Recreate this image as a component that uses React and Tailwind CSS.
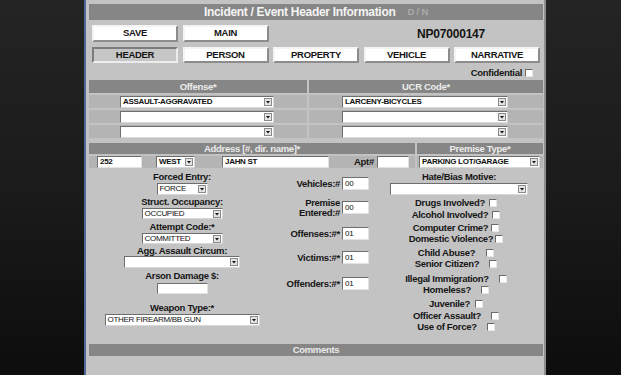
import React from "react";

const FONT = "font-['Liberation_Sans',Arial,Helvetica,sans-serif]";
const LBL = "text-[9.5px] tracking-[-0.3px] font-bold text-[#161616]";
const HDR = "text-[9.5px] tracking-[-0.3px] font-bold text-[#ececec] leading-none";

function Arrow() {
  return (
    <svg width="8" height="8" viewBox="0 0 8 8" className="shrink-0 mr-[1px]">
      <rect x="0.5" y="0.5" width="7" height="7" fill="#e4e4e4" stroke="#8a8a8a" />
      <path d="M2 3h4L4 5.5z" fill="#111" />
    </svg>
  );
}

function Select({ w, h = "h-[12px]", value = "", bold = false }) {
  return (
    <div
      className={`${w} ${h} shrink-0 flex items-center bg-white border border-t-[#6e6e6e] border-l-[#6e6e6e] border-b-[#d8d8d8] border-r-[#d8d8d8]`}
    >
      <span
        className={`flex-1 pl-[2px] text-[8px] tracking-[-0.3px] leading-none text-[#111] whitespace-nowrap overflow-hidden ${
          bold ? "font-bold" : ""
        }`}
      >
        {value}
      </span>
      <Arrow />
    </div>
  );
}

function Input({ w, h = "h-[12px]", value = "", bold = false }) {
  return (
    <div
      className={`${w} ${h} shrink-0 flex items-center bg-white border border-t-[#6e6e6e] border-l-[#6e6e6e] border-b-[#e2e2e2] border-r-[#e2e2e2]`}
    >
      <span className={`pl-[2px] text-[8px] tracking-[-0.3px] leading-none text-[#111] ${bold ? "font-bold" : ""}`}>
        {value}
      </span>
    </div>
  );
}

function Check() {
  return (
    <span className="inline-block w-[8px] h-[8px] shrink-0 bg-white border border-t-[#6a6a6a] border-l-[#6a6a6a] border-b-[#e6e6e6] border-r-[#e6e6e6]" />
  );
}

function Btn({ children, active = false }) {
  return (
    <div
      className={`w-[86px] h-full flex items-center justify-center text-[9.5px] tracking-[-0.3px] font-bold text-[#151515] border-2 ${
        active
          ? "bg-[#c6c6c6] border-t-[#7c7c7c] border-l-[#7c7c7c] border-b-[#ececec] border-r-[#ececec]"
          : "bg-white border-t-[#f4f4f4] border-l-[#f4f4f4] border-b-[#8c8c8c] border-r-[#8c8c8c]"
      }`}
    >
      {children}
    </div>
  );
}

const Label = ({ children, cls = "" }) => (
  <div className={`${LBL} leading-[12px] h-[12px] whitespace-nowrap ${cls}`}>{children}</div>
);

function CheckRow({ label, gap, mt }) {
  return (
    <div className={`h-[11px] flex items-center justify-center ${mt} ${gap}`}>
      <span className={`${LBL} leading-none whitespace-nowrap`}>{label}</span>
      <Check />
    </div>
  );
}

function MidRow({ label, mt, value }) {
  return (
    <div className={`flex items-center justify-end gap-[2px] ${mt}`}>
      <div className={`${LBL} leading-[9.5px] text-right whitespace-nowrap`}>{label}</div>
      <Input w="w-[27px]" h="h-[13px]" value={value} />
    </div>
  );
}

export default function App() {
  return (
    <div
      className={`w-[621px] h-[375px] overflow-hidden bg-linear-to-b from-[#242424] via-[#1b1b1b] to-[#0d0d0d] ${FONT}`}
    >
      <div className="ml-[84px] w-[462px] h-[375px] border-l-2 border-l-[#50679a] border-r-2 border-r-[#8e8e8e] bg-[#c3c3c3] pl-[3px] pr-[1px] pt-[4px]">
        {/* title bar */}
        <div className="h-[16px] bg-[#868686] flex items-center justify-center gap-[12px]">
          <span className="text-[12px] tracking-[-0.3px] font-bold text-[#f4f4f4] leading-none">
            Incident / Event Header Information
          </span>
          <span className="text-[9.5px] tracking-[-0.2px] font-bold text-[#ababab] leading-none">D / N</span>
        </div>

        {/* buttons row 1 */}
        <div className="mt-[5px] h-[17px] flex items-center pl-[3px] gap-[4.5px]">
          <Btn>SAVE</Btn>
          <Btn>MAIN</Btn>
          <span className="ml-[144px] text-[12px] tracking-[-0.2px] font-bold text-[#141414] leading-none">
            NP07000147
          </span>
        </div>

        {/* buttons row 2 */}
        <div className="mt-[5px] h-[16px] flex items-center pl-[3px] gap-[4.5px]">
          <Btn active>HEADER</Btn>
          <Btn>PERSON</Btn>
          <Btn>PROPERTY</Btn>
          <Btn>VEHICLE</Btn>
          <Btn>NARRATIVE</Btn>
        </div>

        {/* confidential */}
        <div className="mt-[5px] h-[10px] flex items-center justify-end gap-[3px] pr-[10px]">
          <span className={`${LBL} leading-none`}>Confidential</span>
          <Check />
        </div>

        {/* offense table */}
        <div className="mt-[2px] grid grid-cols-[218px_234px] gap-x-[2px] gap-y-[2px]">
          <div className={`h-[13px] bg-[#868686] flex items-center justify-center ${HDR}`}>Offense*</div>
          <div className={`h-[13px] bg-[#868686] flex items-center justify-center ${HDR}`}>UCR Code*</div>
          {[
            ["ASSAULT-AGGRAVATED", "LARCENY-BICYCLES"],
            ["", ""],
            ["", ""],
          ].map((r, i) => (
            <React.Fragment key={i}>
              <div className="h-[13px] bg-[#b4b4b4] flex items-center pl-[31px]">
                <Select w="w-[154px]" value={r[0]} bold />
              </div>
              <div className="h-[13px] bg-[#b4b4b4] flex items-center pl-[33px]">
                <Select w="w-[166px]" value={r[1]} bold />
              </div>
            </React.Fragment>
          ))}
        </div>

        {/* address */}
        <div className="mt-[5px] grid grid-cols-[326px_126px] gap-x-[2px] gap-y-[2px]">
          <div className={`h-[11px] bg-[#868686] flex items-center justify-center ${HDR}`}>
            Address [#, dir. name]*
          </div>
          <div className={`h-[11px] bg-[#868686] flex items-center justify-center ${HDR}`}>Premise Type*</div>
          <div className="h-[12px] bg-[#b4b4b4] flex items-center pl-[8px]">
            <Input w="w-[45px]" h="h-[12px]" value="252" bold />
            <div className="ml-[14px]">
              <Select w="w-[39px]" value="WEST" bold />
            </div>
            <div className="ml-[27px]">
              <Input w="w-[107px]" h="h-[12px]" value="JAHN ST" bold />
            </div>
            <span className={`ml-[25px] ${LBL} leading-none`}>Apt#</span>
            <div className="ml-[3px]">
              <Input w="w-[32px]" h="h-[12px]" />
            </div>
          </div>
          <div className="h-[12px] bg-[#b4b4b4] flex items-center pl-[2px]">
            <Select w="w-[121px]" value="PARKING LOT/GARAGE" bold />
          </div>
        </div>

        {/* lower section */}
        <div className="mt-[3px] flex items-start">
          {/* left column */}
          <div className="w-[186px] flex flex-col items-center">
            <Label>Forced Entry:</Label>
            <Select w="w-[51px]" value="FORCE" />
            <Label cls="mt-[1px]">Struct. Occupancy:</Label>
            <Select w="w-[81px]" h="h-[11px]" value="OCCUPIED" />
            <Label cls="mt-[2px]">Attempt Code:*</Label>
            <Select w="w-[81px]" h="h-[11px]" value="COMMITTED" />
            <div className={`mt-[1px] h-[11px] ${LBL} leading-[11px]`}>Agg. Assault Circum:</div>
            <Select w="w-[116px]" />
            <Label cls="mt-[2px]">Arson Damage $:</Label>
            <div className="mt-[1px]">
              <Input w="w-[51px]" h="h-[11px]" />
            </div>
            <Label cls="mt-[8px]">Weapon Type:*</Label>
            <Select w="w-[155px]" value="OTHER FIREARM/BB GUN" />
          </div>

          {/* middle column */}
          <div className="w-[105px] pr-[11px] flex flex-col">
            <MidRow label="Vehicles:#" mt="mt-[6px]" value="00" />
            <MidRow
              label={
                <>
                  Premise
                  <br />
                  Entered:#
                </>
              }
              mt="mt-[8px]"
              value="00"
            />
            <MidRow label="Offenses:#*" mt="mt-[10px]" value="01" />
            <MidRow label="Victims:#*" mt="mt-[11px]" value="01" />
            <MidRow label="Offenders:#*" mt="mt-[13px]" value="01" />
          </div>

          {/* right column */}
          <div className="w-[152px] flex flex-col items-stretch">
            <div className="flex flex-col items-center pl-[6px]">
              <Label>Hate/Bias Motive:</Label>
              <Select w="w-[138px]" />
            </div>
            <CheckRow label="Drugs Involved?" gap="gap-[4px]" mt="mt-[2px]" />
            <CheckRow label="Alcohol Involved?" gap="gap-[4px]" mt="mt-[1px]" />
            <CheckRow label="Computer Crime?" gap="gap-[3px]" mt="mt-[2px]" />
            <CheckRow label="Domestic Violence?" gap="gap-[2px]" mt="mt-0" />
            <CheckRow label="Child Abuse?" gap="gap-[11px]" mt="mt-[3px]" />
            <CheckRow label="Senior Citizen?" gap="gap-[10px]" mt="mt-0" />
            <CheckRow label="Illegal Immigration?" gap="gap-[10px]" mt="mt-[4px]" />
            <CheckRow label="Homeless?" gap="gap-[10px]" mt="mt-0" />
            <CheckRow label="Juvenile?" gap="gap-[5px]" mt="mt-[3px]" />
            <CheckRow label="Officer Assault?" gap="gap-[10px]" mt="mt-[1px]" />
            <CheckRow label="Use of Force?" gap="gap-[10px]" mt="mt-0" />
          </div>
        </div>

        {/* comments */}
        <div className={`mt-[12px] h-[12px] bg-[#868686] flex items-center justify-center ${HDR}`}>Comments</div>
      </div>
    </div>
  );
}
